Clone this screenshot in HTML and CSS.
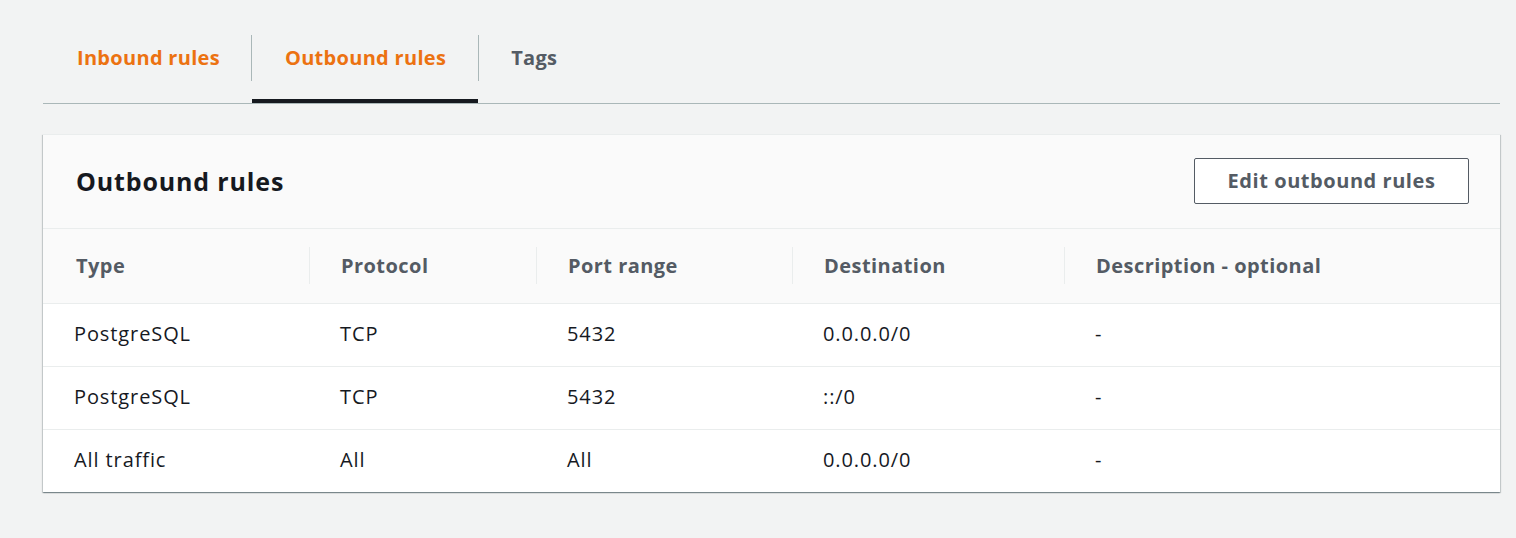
FILE: index.html
```html
<!DOCTYPE html>
<html>
<head>
<meta charset="utf-8">
<link rel="stylesheet" href="styles.css">
</head>
<body>
<div class="page">
  <nav class="tabs">
    <a class="tab tab-first">Inbound rules</a>
    <span class="tab-divider"></span>
    <a class="tab tab-active">Outbound rules</a>
    <span class="tab-divider"></span>
    <a class="tab tab-plain">Tags</a>
  </nav>

  <section class="panel">
    <header class="panel-header">
      <h2 class="panel-title">Outbound rules</h2>
      <button class="btn">Edit outbound rules</button>
    </header>
    <table class="rules">
      <colgroup>
        <col class="c1"><col class="c2"><col class="c3"><col class="c4"><col class="c5">
      </colgroup>
      <thead>
        <tr>
          <th><span class="th-inner">Type</span></th>
          <th><span class="th-inner sep">Protocol</span></th>
          <th><span class="th-inner sep">Port range</span></th>
          <th><span class="th-inner sep">Destination</span></th>
          <th><span class="th-inner sep">Description - optional</span></th>
        </tr>
      </thead>
      <tbody>
        <tr><td>PostgreSQL</td><td>TCP</td><td>5432</td><td>0.0.0.0/0</td><td>-</td></tr>
        <tr><td>PostgreSQL</td><td>TCP</td><td>5432</td><td>::/0</td><td>-</td></tr>
        <tr><td>All traffic</td><td>All</td><td>All</td><td>0.0.0.0/0</td><td>-</td></tr>
      </tbody>
    </table>
  </section>
</div>
</body>
</html>
```

FILE: styles.css
```css
* { box-sizing: border-box; }
html, body { margin: 0; padding: 0; }
body {
  background: #f2f3f3;
  font-family: "Open Sans", "Noto Sans", "Liberation Sans", sans-serif;
  color: #16191f;
  width: 1516px;
  height: 538px;
  overflow: hidden;
}
.page {
  padding: 12px 16px 0 43px;
}
.tabs {
  display: flex;
  align-items: center;
  border-bottom: 1px solid #aab7b8;
}
.tab {
  height: 91px;
  padding: 3px 33px 0 32px;
  display: flex;
  align-items: center;
  border-bottom: 4px solid transparent;
  font-size: 20px;
  letter-spacing: 0.3px;
  font-weight: 700;
  color: #ec7211;
}
.tab-first {
  padding-left: 34px;
  padding-right: 31px;
}
.tab-active {
  border-bottom-color: #16191f;
  padding-left: 33px;
  padding-right: 32px;
}
.tab-plain { color: #545b64; }
.tab-divider {
  width: 1px;
  height: 46px;
  background: #aab7b8;
}
.panel {
  margin-top: 30px;
  background: #fff;
  box-shadow: 0 1px 1px 0 rgba(0, 28, 36, 0.3), 1px 1px 1px 0 rgba(0, 28, 36, 0.15), -1px 1px 1px 0 rgba(0, 28, 36, 0.15);
  border-top: 1px solid #eaeded;
}
.panel-header {
  height: 94px;
  display: flex;
  align-items: center;
  justify-content: space-between;
  padding: 0 31px 2px 33px;
  background: #fafafa;
  border-bottom: 1px solid #eaeded;
}
.panel-title {
  margin: 0;
  font-size: 25px;
  letter-spacing: 0.85px;
  font-weight: 700;
  color: #16191f;
}
.btn {
  width: 275px;
  height: 46px;
  background: #fff;
  border: 1px solid #545b64;
  border-radius: 2px;
  font-family: inherit;
  font-size: 20px;
  letter-spacing: 0.55px;
  font-weight: 700;
  color: #545b64;
  padding: 0;
}
.rules {
  width: 100%;
  border-collapse: collapse;
  table-layout: fixed;
}
.c1 { width: 266px; }
.c2 { width: 227px; }
.c3 { width: 256px; }
.c4 { width: 272px; }
thead tr {
  height: 74px;
  background: #fafafa;
  border-bottom: 1px solid #eaeded;
}
th {
  text-align: left;
  padding: 0;
  font-size: 20px;
  letter-spacing: 0.45px;
  font-weight: 700;
  color: #545b64;
}
.th-inner {
  display: block;
  padding-left: 33px;
  line-height: 37px;
}
.th-inner.sep {
  border-left: 1px solid #eaeded;
  padding-left: 31px;
}
tbody tr {
  height: 63px;
  border-bottom: 1px solid #eaeded;
}
tbody tr:last-child { border-bottom: none; }
td {
  padding: 0 0 2px 31px;
  font-size: 20px;
  letter-spacing: 0.9px;
  color: #16191f;
}
```
